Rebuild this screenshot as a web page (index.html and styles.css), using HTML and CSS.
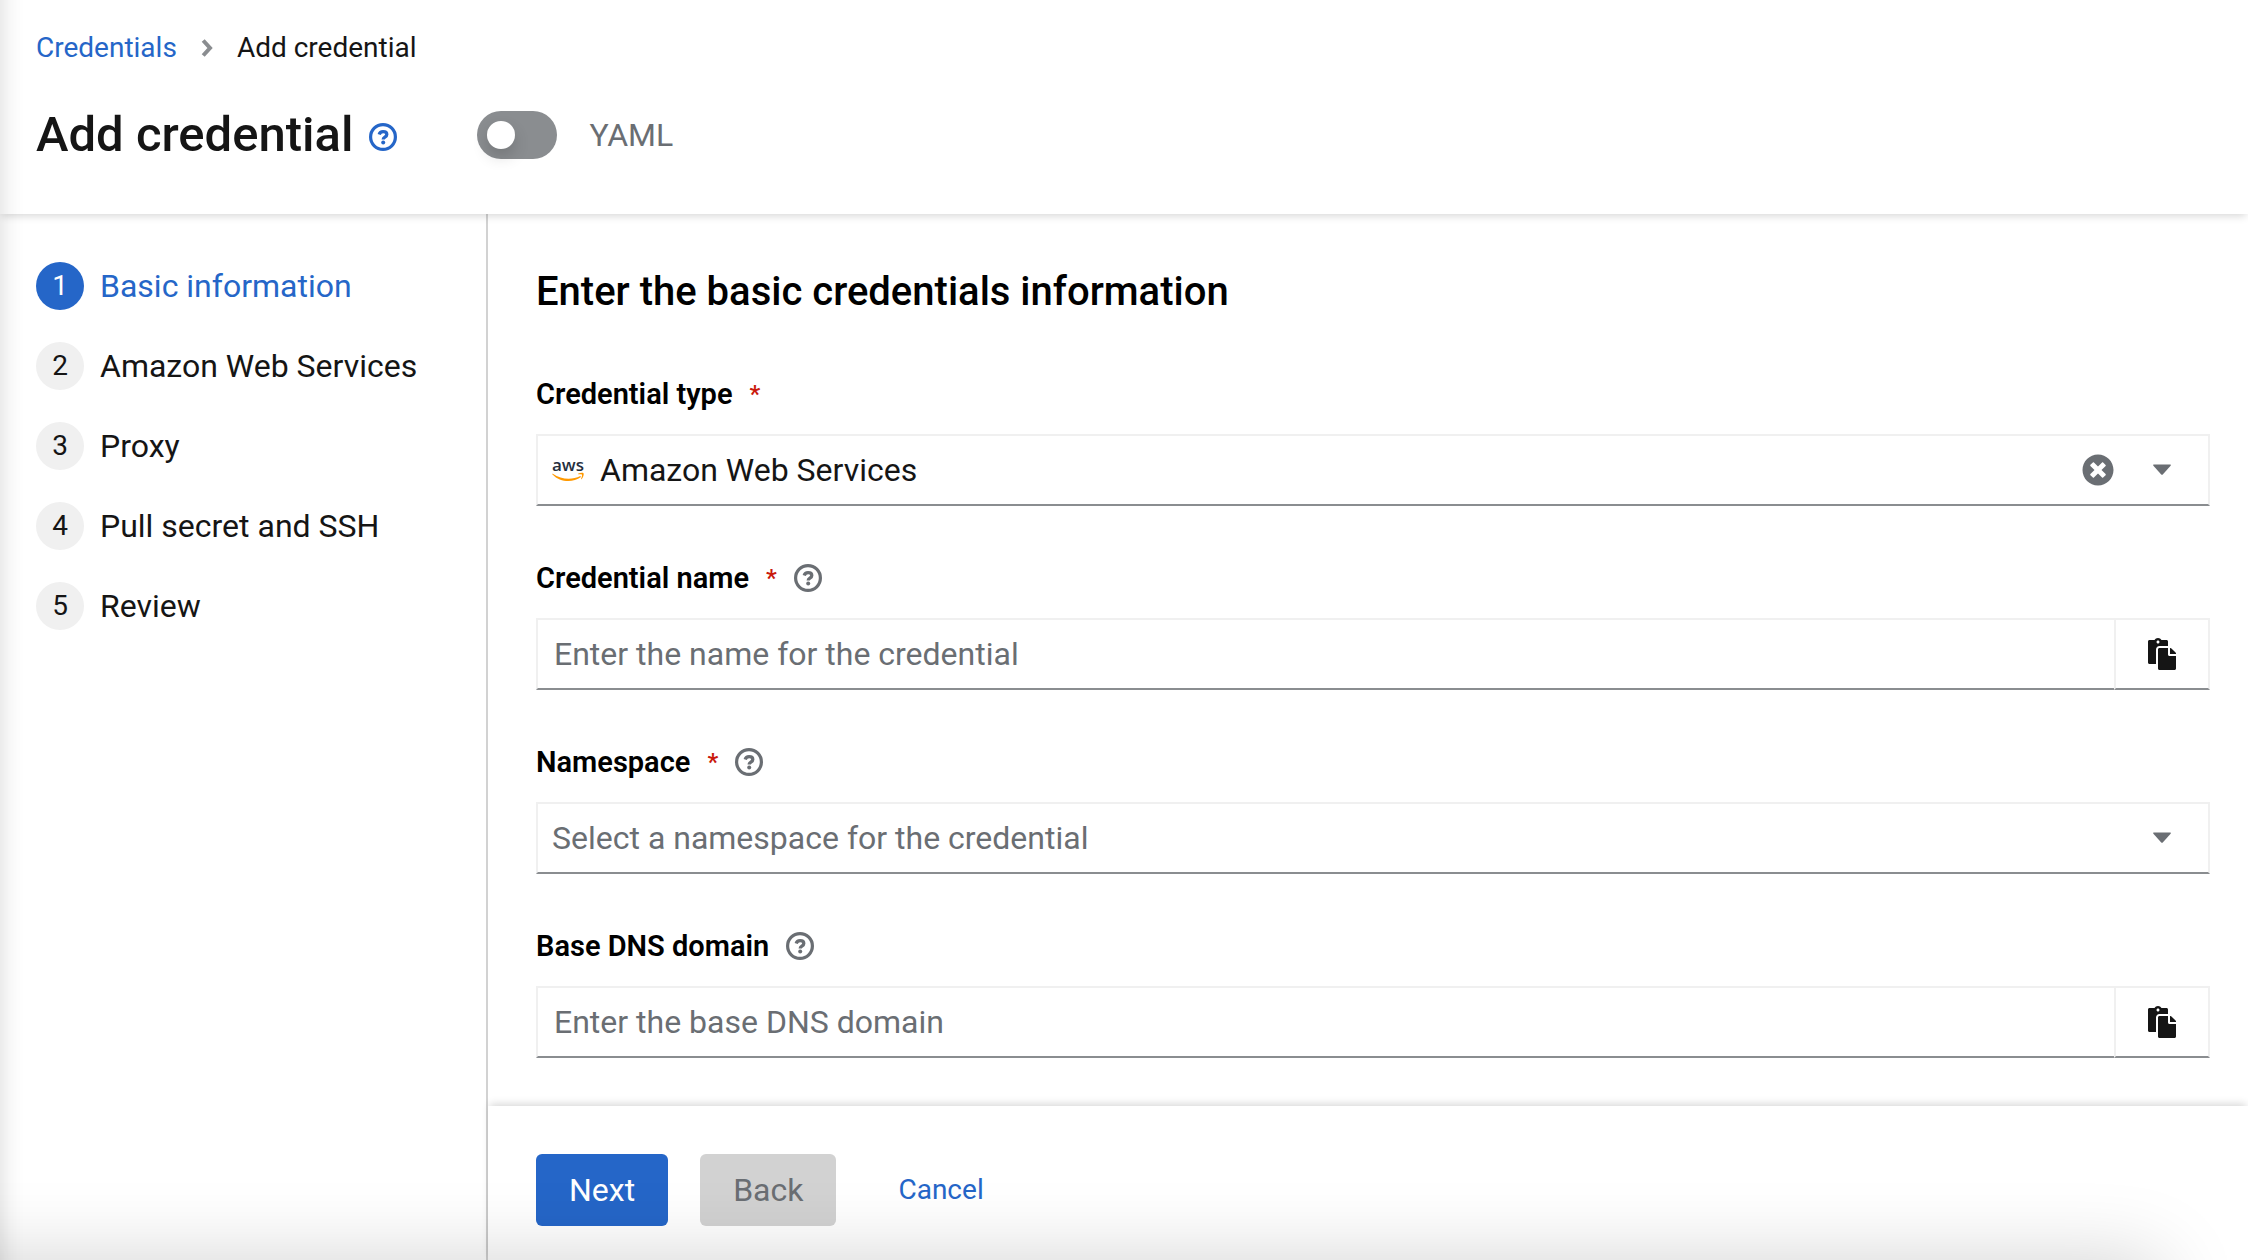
FILE: index.html
```html
<!DOCTYPE html>
<html lang="en">
<head>
<meta charset="utf-8">
<meta name="viewport" content="width=device-width, initial-scale=1">
<title>Add credential</title>
<link rel="stylesheet" href="styles.css">
</head>
<body>
<svg class="sprite" aria-hidden="true">
  <symbol id="i-help" viewBox="0 0 28 28">
    <circle cx="14" cy="14" r="12.400" fill="none" stroke="currentColor" stroke-width="3.200"/>
    <path d="M10.200 11.500c.5-1.900 1.900-2.800 3.900-2.800 2.300 0 3.700 1 3.700 2.700 0 1.400-.8 2-1.900 2.700-1.200.8-1.700 1.200-1.700 2.400" fill="none" stroke="currentColor" stroke-width="3.300"/>
    <circle cx="14.200" cy="19.400" r="2" fill="currentColor"/>
  </symbol>
  <symbol id="i-caret" viewBox="0 0 20 12">
    <path d="M2 0.500h16q1.600 0 .6 1.300L11 10.300q-1 1-2 0L1.400 1.800Q.4.500 2 .500z" fill="currentColor"/>
  </symbol>
  <symbol id="i-paste" viewBox="0 0 448 512">
    <path d="M128 184c0-30.879 25.122-56 56-56h136V56c0-13.255-10.745-24-24-24h-80.610C204.306 12.890 183.637 0 160 0s-44.306 12.890-55.390 32H24C10.745 32 0 42.745 0 56v336c0 13.255 10.745 24 24 24h104V184zm32-144c13.255 0 24 10.745 24 24s-10.745 24-24 24-24-10.745-24-24 10.745-24 24-24zm184 248h104v200c0 13.255-10.745 24-24 24H184c-13.255 0-24-10.745-24-24V184c0-13.255 10.745-24 24-24h136v104c0 13.200 10.800 24 24 24zm104-38.059V256h-96v-96h6.059a24 24 0 0 1 16.970 7.029l65.941 65.941a24.002 24.002 0 0 1 7.030 16.971z" fill="currentColor"/>
  </symbol>
</svg>

<div class="page">
  <header class="header">
    <nav class="breadcrumb" aria-label="Breadcrumb">
      <a href="#credentials">Credentials</a>
      <svg class="chevron" viewBox="0 0 12 18" aria-hidden="true"><path d="M2.200 1.500 9 9l-6.800 7.500" fill="none" stroke="currentColor" stroke-width="4"/></svg>
      <span aria-current="page">Add credential</span>
    </nav>
    <div class="title-row">
      <h1>Add credential</h1>
      <button class="help help-title" type="button" aria-label="More about credentials"><svg><use href="#i-help"/></svg></button>
      <label class="switch"><input type="checkbox" role="switch"><span>YAML</span></label>
    </div>
  </header>

  <div class="wizard">
    <nav class="steps" aria-label="Steps">
      <ol>
        <li><a class="current" href="#basic" aria-current="step"><span class="num">1</span>Basic information</a></li>
        <li><a href="#aws"><span class="num">2</span>Amazon Web Services</a></li>
        <li><a href="#proxy"><span class="num">3</span>Proxy</a></li>
        <li><a href="#pull-secret"><span class="num">4</span>Pull secret and SSH</a></li>
        <li><a href="#review"><span class="num">5</span>Review</a></li>
      </ol>
    </nav>

    <form class="main">
      <div class="fields">
        <h2>Enter the basic credentials information</h2>

        <div class="group">
          <div class="label-row"><label for="type">Credential type</label><span class="required">*</span></div>
          <div class="control">
            <svg class="aws" viewBox="0 0 32 32" aria-hidden="true">
              <text x="16" y="17" text-anchor="middle">aws</text>
              <path d="M.8 19.700c8.500 5.800 19 6.500 27.500 2.300l.7 1C20.500 29.300 8 28.300.5 20.500c-.5-.6-.2-1 .3-.8z"/>
              <path d="M26 19.800c2-1.200 5-1.200 5.500-.6.600.8-.2 4.400-2 6-.4.200-.6 0-.4-.5.700-1.600 1.200-3.400.9-4s-2.200-.6-3.700-.4c-.5 0-.6-.3-.3-.5z"/>
            </svg>
            <select id="type"><option>Amazon Web Services</option></select>
            <button class="clear" type="button" aria-label="Clear selection">
              <svg viewBox="0 0 512 512"><path d="M256 8C119 8 8 119 8 256s111 248 248 248 248-111 248-248S393 8 256 8zm121.600 313.100c4.700 4.700 4.700 12.300 0 17L338 377.600c-4.700 4.700-12.300 4.700-17 0L256 312l-65.100 65.600c-4.700 4.700-12.300 4.700-17 0L134.400 338c-4.700-4.700-4.700-12.300 0-17l65.600-65-65.600-65.100c-4.700-4.700-4.700-12.300 0-17l39.600-39.600c4.700-4.700 12.300-4.700 17 0l65 65.700 65.100-65.600c4.700-4.700 12.300-4.700 17 0l39.600 39.600c4.700 4.700 4.700 12.300 0 17L312 256l65.600 65.100z" fill="currentColor"/></svg>
            </button>
            <svg class="caret" aria-hidden="true"><use href="#i-caret"/></svg>
          </div>
        </div>

        <div class="group">
          <div class="label-row"><label for="name">Credential name</label><span class="required">*</span><button class="help" type="button" aria-label="Help for credential name"><svg><use href="#i-help"/></svg></button></div>
          <div class="control with-paste">
            <input id="name" type="text" placeholder="Enter the name for the credential">
            <button class="paste" type="button" aria-label="Paste"><svg><use href="#i-paste"/></svg></button>
          </div>
        </div>

        <div class="group">
          <div class="label-row"><label for="namespace">Namespace</label><span class="required">*</span><button class="help" type="button" aria-label="Help for namespace"><svg><use href="#i-help"/></svg></button></div>
          <div class="control">
            <select id="namespace" class="empty"><option>Select a namespace for the credential</option></select>
            <svg class="caret" aria-hidden="true"><use href="#i-caret"/></svg>
          </div>
        </div>

        <div class="group">
          <div class="label-row"><label for="dns">Base DNS domain</label><button class="help" type="button" aria-label="Help for base DNS domain"><svg><use href="#i-help"/></svg></button></div>
          <div class="control with-paste">
            <input id="dns" type="text" placeholder="Enter the base DNS domain">
            <button class="paste" type="button" aria-label="Paste"><svg><use href="#i-paste"/></svg></button>
          </div>
        </div>
      </div>

      <footer class="footer">
        <button class="btn primary" type="button">Next</button>
        <button class="btn" type="button" disabled>Back</button>
        <button class="btn link" type="button">Cancel</button>
      </footer>
    </form>
  </div>
</div>
</body>
</html>
```

FILE: styles.css
```css
* { box-sizing: border-box; }

body {
  margin: 0;
  background: #fff;
  color: #151515;
  font: 32px/48px Roboto, "Liberation Sans", sans-serif;
}

/* soft edges of the scrolling viewport */
body::before,
body::after {
  content: "";
  position: fixed;
  z-index: 5;
  pointer-events: none;
}
body::before {
  top: -50px;
  bottom: -50px;
  right: 100%;
  width: 50px;
  box-shadow: 0 0 24px rgba(0, 0, 0, .16);
}
body::after {
  top: 100%;
  left: -100px;
  right: 88px;
  height: 100px;
  box-shadow: 0 0 80px rgba(0, 0, 0, .18);
}

button, input, select { font: inherit; color: inherit; }
button {
  padding: 0;
  border: 0;
  background: none;
  cursor: pointer;
}
a { color: #2566c8; text-decoration: none; }
svg { display: block; }
.sprite { position: absolute; width: 0; height: 0; }

.page {
  min-height: 100vh;
  display: flex;
  flex-direction: column;
}

.header {
  position: relative;
  z-index: 2;
  padding: 26px 36px 48px;
  background: #fff;
  box-shadow: 0 4px 8px -2px rgba(3, 3, 3, .16);
}
.breadcrumb {
  display: flex;
  align-items: center;
  gap: 24px;
  font-size: 28px;
  line-height: 44px;
}
.chevron { width: 12px; height: 18px; color: #8a8d90; }
.title-row {
  display: flex;
  align-items: center;
  margin-top: 34px;
}
h1 {
  margin: 0;
  font-size: 49px;
  font-weight: 500;
  line-height: 62px;
}

.help { color: #6a6e73; }
.help svg { width: 28px; height: 28px; }
.help-title { margin: 4px 0 0 16px; color: #2566c8; }

.switch {
  display: flex;
  align-items: center;
  gap: 32px;
  margin-left: 80px;
  color: #6a6e73;
}
.switch input {
  appearance: none;
  width: 80px;
  height: 48px;
  margin: 0;
  padding: 10px;
  border-radius: 24px;
  background: #8a8d90;
}
.switch input::before {
  content: "";
  display: block;
  width: 28px;
  height: 28px;
  border-radius: 50%;
  background: #fff;
  box-shadow: 0 8px 16px rgba(3, 3, 3, .16);
}
.switch input:checked::before { margin-left: auto; }

.wizard { flex: 1; display: flex; }

.steps {
  flex: 0 0 488px;
  padding: 48px 36px;
  border-right: 2px solid #d2d2d2;
}
.steps ol {
  display: grid;
  gap: 32px;
  margin: 0;
  padding: 0;
  list-style: none;
}
.steps a {
  display: flex;
  align-items: center;
  gap: 16px;
  color: #151515;
}
.steps .num {
  width: 48px;
  border-radius: 50%;
  background: #f0f0f0;
  font-size: 28px;
  text-align: center;
}
.steps .current { color: #2566c8; }
.steps .current .num { background: #2566c8; color: #fff; }

.main {
  flex: 1;
  min-width: 0;
  display: flex;
  flex-direction: column;
}
.fields {
  flex: 1;
  padding: 48px 38px 48px 48px;
}
h2 {
  margin: 0 0 48px;
  color: #000;
  font-size: 40px;
  font-weight: 500;
  line-height: 60px;
}
.group + .group { margin-top: 48px; }
.label-row {
  display: flex;
  align-items: center;
  gap: 17px;
  height: 48px;
  margin-bottom: 16px;
  color: #000;
  font-size: 29px;
  font-weight: 600;
}
.required { color: #c9190b; font-size: 24px; }

.control {
  display: flex;
  align-items: center;
  height: 72px;
  padding: 0 36px 0 14px;
  border: 2px solid #f0f0f0;
  border-bottom-color: #8a8d90;
}
.control select {
  flex: 1;
  min-width: 0;
  height: 100%;
  padding: 0;
  border: 0;
  appearance: none;
  background: none;
}
.control select.empty { color: #6a6e73; }
.aws {
  width: 32px;
  height: 32px;
  margin-right: 16px;
  overflow: visible;
  fill: #f90;
}
.aws text { fill: #252f3e; font: 600 17px/20px "Open Sans", sans-serif; }
.clear { margin-right: 38px; color: #6a6e73; }
.clear svg { width: 32px; height: 32px; }
.caret { width: 20px; height: 12px; color: #6a6e73; }

.with-paste { padding: 0; border: 0; }
.with-paste input {
  flex: 1;
  min-width: 0;
  height: 100%;
  padding: 0 16px;
  border: 2px solid #f0f0f0;
  border-right: 0;
  border-bottom-color: #8a8d90;
  background: none;
}
.with-paste input::placeholder { color: #6a6e73; opacity: 1; }
.paste {
  display: grid;
  place-items: center;
  width: 96px;
  height: 100%;
  border: 2px solid #f0f0f0;
  border-bottom-color: #8a8d90;
}
.paste svg { width: 28px; height: 32px; }

.footer {
  display: flex;
  gap: 32px;
  padding: 48px 48px 34px;
  background: #fff;
  box-shadow: 0 -4px 8px -2px rgba(3, 3, 3, .16);
}
.btn {
  height: 72px;
  padding: 0 33px;
  border-radius: 6px;
}
.btn.primary { background: #2566c8; color: #fff; }
.btn:disabled { background: #d2d2d2; color: #6a6e73; }
.btn.link { padding: 0 30px; color: #2566c8; font-size: 28px; }
```
